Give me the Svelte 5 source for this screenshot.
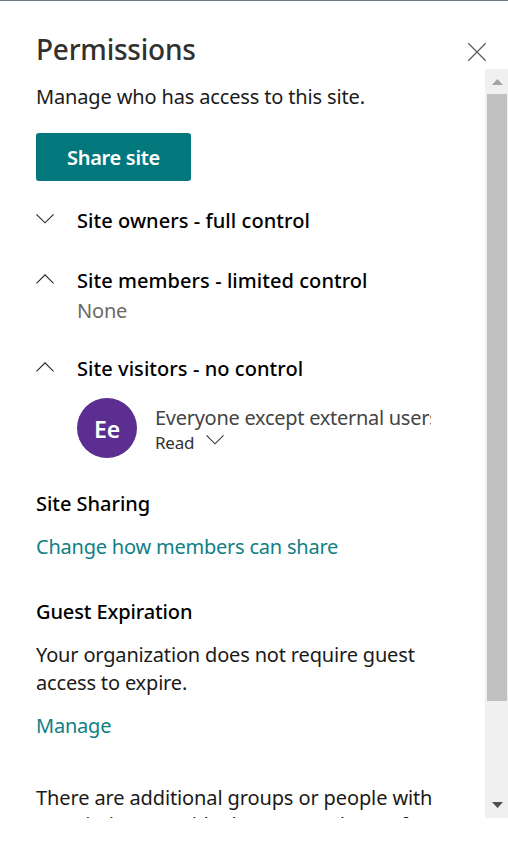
<script>
  const sections = [
    { title: 'Site owners - full control', open: false },
    { title: 'Site members - limited control', open: true, note: 'None' },
    { title: 'Site visitors - no control', open: true, person: { initials: 'Ee', name: 'Everyone except external users', role: 'Read' } }
  ];
</script>

<div class="panel">
  <header>
    <h1>Permissions</h1>
    <button class="close" aria-label="Close">
      <svg width="20" height="20" viewBox="0 0 20 20"><path d="M1.3 1.3 18.7 18.7M18.7 1.3 1.3 18.7" fill="none" stroke="#605e5c" stroke-width="1.3" /></svg>
    </button>
  </header>

  <div class="body">
    <div class="content">
      <p class="intro">Manage who has access to this site.</p>
      <button class="share">Share site</button>

      {#each sections as s}
        <section class:has-note={s.note} class:has-person={s.person}>
          <svg class="chev" width="18" height="12" viewBox="0 0 18 12">
            <path d={s.open ? 'M.5 10.3 9 1.8 17.5 10.3' : 'M.5 1.3 9 9.8 17.5 1.3'} fill="none" stroke="#222" stroke-width="1.1" />
          </svg>
          <div class="detail">
            <h2>{s.title}</h2>
            {#if s.note}<p class="note">{s.note}</p>{/if}
            {#if s.person}
              <div class="person">
                <div class="avatar">{s.person.initials}</div>
                <div class="who">
                  <div class="name">{s.person.name}</div>
                  <div class="role">
                    <span>{s.person.role}</span>
                    <svg width="18" height="12" viewBox="0 0 18 12"><path d="M.5 1.3 9 9.8 17.5 1.3" fill="none" stroke="#333" stroke-width="1.1" /></svg>
                  </div>
                </div>
              </div>
            {/if}
          </div>
        </section>
      {/each}

      <h2 class="sharing">Site Sharing</h2>
      <a class="change" href="#share">Change how members can share</a>
      <h2 class="guest">Guest Expiration</h2>
      <p class="org">Your organization does not require guest<br />access to expire.</p>
      <a class="manage" href="#manage">Manage</a>
      <p class="extra">There are additional groups or people with <span>permissions outside the groups above. If</span></p>
    </div>
    <div class="scrollbar">
      <svg class="up" width="11" height="6" viewBox="0 0 11 6"><path d="M0 6 5.5 0 11 6z" fill="#a3a3a3" /></svg>
      <div class="thumb"></div>
      <svg class="down" width="11" height="6" viewBox="0 0 11 6"><path d="M0 0 5.5 6 11 0z" fill="#505050" /></svg>
    </div>
  </div>
</div>

<style>
  :global(body) { background: #fff; }
  .panel {
    box-sizing: border-box;
    height: 864px;
    border-top: 1px solid #6f7b85;
    font-family: "Noto Sans", "Open Sans", sans-serif;
    font-size: 20px;
    line-height: 28px;
    letter-spacing: -0.15px;
    color: #1b1a19;
    overflow: hidden;
    white-space: nowrap;
  }
  h1, h2, p { margin: 0; }
  button { border: 0; padding: 0; background: none; font: inherit; letter-spacing: inherit; }
  header { display: flex; justify-content: space-between; height: 68px; padding: 0 21px 0 36px; }
  h1 { margin-top: 28px; font-size: 28px; line-height: 40px; font-weight: 500; letter-spacing: -0.22px; color: #323130; }
  .close { height: 20px; margin-top: 41px; display: flex; }
  .body { display: flex; height: 749px; overflow: hidden; }
  .content { flex: 1; padding: 14px 0 0 36px; min-width: 0; }
  .share {
    display: block; width: 155px; height: 48px; margin-top: 22px; border-radius: 3px;
    background: #03787c; color: #fff; font-weight: 600; line-height: 50px; text-align: center;
    letter-spacing: -0.3px;
  }
  section { display: flex; height: 28px; margin-top: 26px; }
  section.has-note { margin-top: 32px; height: 60px; }
  section.has-person { margin-top: 28px; height: 104px; }
  .chev { margin-top: 6px; }
  .detail { margin-left: 23px; }
  h2 { font-size: 20px; font-weight: 500; letter-spacing: 0.06px; color: #000; }
  .note { margin-top: 2px; color: #6b6967; letter-spacing: -0.2px; }
  .person { display: flex; gap: 18px; width: 354px; margin-top: 15px; }
  .avatar {
    width: 60px; height: 60px; border-radius: 50%; background: #5c2e91; color: #fff;
    font-size: 23px; font-weight: 600; line-height: 63px; text-align: center;
  }
  .who { width: 276px; overflow: hidden; padding-top: 6px; color: #323130; }
  .name { color: #444; letter-spacing: -0.28px; }
  .role { display: flex; gap: 12px; font-size: 17px; line-height: 22px; letter-spacing: -0.2px; }
  .role svg { margin-top: 2px; }
  .content > h2 { margin-top: 31px; letter-spacing: -0.03px; }
  a { display: block; color: #0f8084; text-decoration: none; margin-top: 15px; letter-spacing: -0.22px; }
  .content > .guest { margin-top: 37px; letter-spacing: -0.12px; }
  .org { margin-top: 15px; letter-spacing: -0.17px; }
  .extra { margin-top: 44px; letter-spacing: -0.12px; }
  .extra span { display: block; margin-top: -1px; letter-spacing: -0.3px; }
  .scrollbar { width: 23px; background: #f0f0f0; display: flex; flex-direction: column; align-items: center; }
  .up { margin: 10px 0 9px 2px; }
  .thumb { width: 20px; height: 607px; margin-left: 1px; background: #c1c1c1; }
  .down { margin: auto 0 10px 2px; }
</style>
